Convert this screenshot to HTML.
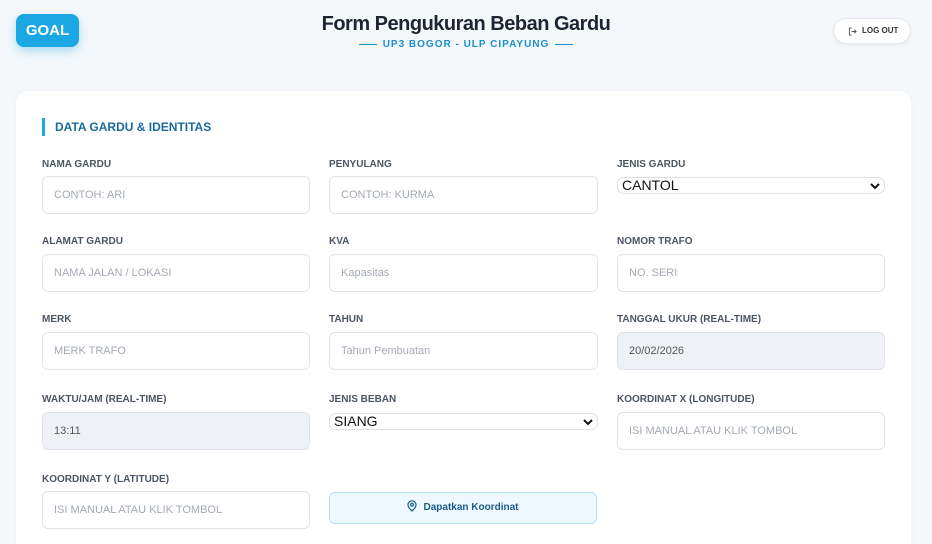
<!DOCTYPE html>
<html><head><style>
*{box-sizing:border-box;margin:0;padding:0}
html,body{width:932px;height:544px;overflow:hidden}
body{background:#f5f8fb;font-family:"Liberation Sans",sans-serif;position:relative}
.goal{position:absolute;left:16px;top:14px;width:63px;height:33px;background:#1ba6e4;border-radius:8px;color:#fff;font-weight:bold;font-size:15px;line-height:33px;text-align:center;box-shadow:0 4px 10px rgba(27,166,228,.35)}
.title{position:absolute;left:0;width:932px;top:13px;text-align:center;font-size:20px;font-weight:bold;color:#1e2433;letter-spacing:-0.5px}
.sub{position:absolute;left:0;width:932px;top:39px;text-align:center;font-size:10px;font-weight:bold;color:#1b8fcc;letter-spacing:1px}
.sub span{display:inline-block;width:18px;height:1px;background:#1b8fcc;vertical-align:middle;margin:0 6px}
.logout{position:absolute;left:833px;top:18px;width:78px;height:26px;background:#fff;border:1px solid #e2e7ee;border-radius:13px;font-size:8px;font-weight:bold;color:#333;line-height:24px;padding-left:28px;box-shadow:0 2px 5px rgba(0,0,0,.05)}
.logout svg{position:absolute;left:14px;top:8px}
.card{position:absolute;left:16px;top:91px;width:895px;height:470px;background:#fff;border-radius:12px;box-shadow:0 1px 6px rgba(0,0,0,.04)}
.sec{position:absolute;left:42px;top:118px;height:18px;border-left:3px solid #1ba6e4;padding-left:10px;font-size:12px;font-weight:bold;color:#1a6a9a;line-height:18px}
.lbl{position:absolute;font-size:10px;font-weight:bold;color:#4b5563}
.in{position:absolute;height:38px;border:1px solid #dfe4ea;border-radius:6px;font-size:11px;color:#a4aab3;padding-left:11px;line-height:36px;background:#fff}
.dis{background:#eef1f5;color:#555}
.sel{position:absolute;height:17px;border:1px solid #dbe1e8;border-radius:7px;font-size:14px;color:#111;padding-left:4px;line-height:15px;background:#fff}
.sel svg{position:absolute;right:4px;top:4px}
.btn{position:absolute;left:329px;top:492px;width:268px;height:32px;background:#eef8fe;border:1px solid #b7dff4;border-radius:6px;font-size:10px;font-weight:bold;color:#1a5d8a;text-align:center;line-height:30px}
</style></head><body>
<div class="goal">GOAL</div>
<div class="title">Form Pengukuran Beban Gardu</div>
<div class="sub"><span></span>UP3 BOGOR - ULP CIPAYUNG<span></span></div>
<div class="logout"><svg width="9" height="9" viewBox="0 0 10 10" fill="none" stroke="#555" stroke-width="1"><path d="M4 1H1.5v8H4M4 5h5M7 3l2 2-2 2"/></svg>LOG OUT</div>
<div class="card"></div>
<div class="sec">DATA GARDU &amp; IDENTITAS</div>

<div class="lbl" style="left:42px;top:159px">NAMA GARDU</div>
<div class="in" style="left:42px;top:176px;width:268px">CONTOH: ARI</div>
<div class="lbl" style="left:329px;top:159px">PENYULANG</div>
<div class="in" style="left:329px;top:176px;width:269px">CONTOH: KURMA</div>
<div class="lbl" style="left:617px;top:159px">JENIS GARDU</div>
<div class="sel" style="left:617px;top:177px;width:268px">CANTOL<svg width="10" height="8" viewBox="0 0 10 8"><path d="M1 2l4 4 4-4" stroke="#111" stroke-width="2" fill="none"/></svg></div>

<div class="lbl" style="left:42px;top:236px">ALAMAT GARDU</div>
<div class="in" style="left:42px;top:254px;width:268px">NAMA JALAN / LOKASI</div>
<div class="lbl" style="left:329px;top:236px">KVA</div>
<div class="in" style="left:329px;top:254px;width:269px">Kapasitas</div>
<div class="lbl" style="left:617px;top:236px">NOMOR TRAFO</div>
<div class="in" style="left:617px;top:254px;width:268px">NO. SERI</div>

<div class="lbl" style="left:42px;top:314px">MERK</div>
<div class="in" style="left:42px;top:332px;width:268px">MERK TRAFO</div>
<div class="lbl" style="left:329px;top:314px">TAHUN</div>
<div class="in" style="left:329px;top:332px;width:269px">Tahun Pembuatan</div>
<div class="lbl" style="left:617px;top:314px">TANGGAL UKUR (REAL-TIME)</div>
<div class="in dis" style="left:617px;top:332px;width:268px">20/02/2026</div>

<div class="lbl" style="left:42px;top:394px">WAKTU/JAM (REAL-TIME)</div>
<div class="in dis" style="left:42px;top:412px;width:268px">13:11</div>
<div class="lbl" style="left:329px;top:394px">JENIS BEBAN</div>
<div class="sel" style="left:329px;top:413px;width:269px">SIANG<svg width="10" height="8" viewBox="0 0 10 8"><path d="M1 2l4 4 4-4" stroke="#111" stroke-width="2" fill="none"/></svg></div>
<div class="lbl" style="left:617px;top:394px">KOORDINAT X (LONGITUDE)</div>
<div class="in" style="left:617px;top:412px;width:268px">ISI MANUAL ATAU KLIK TOMBOL</div>

<div class="lbl" style="left:42px;top:474px">KOORDINAT Y (LATITUDE)</div>
<div class="in" style="left:42px;top:491px;width:268px">ISI MANUAL ATAU KLIK TOMBOL</div>
<div class="btn"><svg width="10" height="12" viewBox="0 0 10 12" style="vertical-align:-2px;margin-right:6px" fill="none" stroke="#1a5d8a" stroke-width="1.2"><path d="M5 11S1 7.5 1 4.8A4 4 0 0 1 9 4.8C9 7.5 5 11 5 11z"/><circle cx="5" cy="4.8" r="1.4"/></svg>Dapatkan Koordinat</div>
</body></html>
